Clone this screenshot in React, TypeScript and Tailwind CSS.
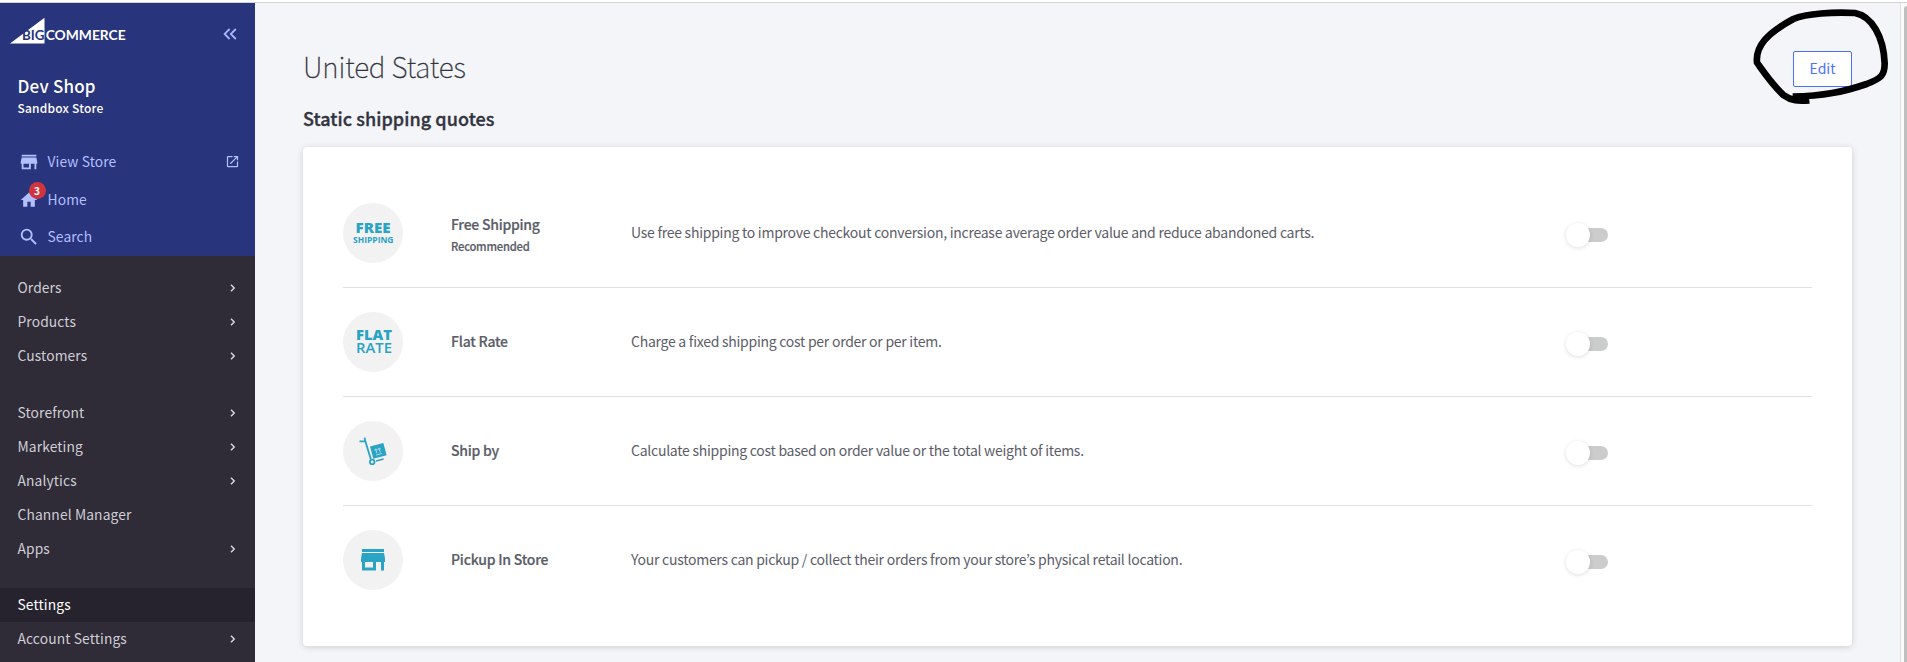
import React from "react";
import { MdStore, MdHome, MdSearch, MdOpenInNew } from "react-icons/md";

type NavItem = { label: string; arrow: boolean; active?: boolean };

const groups: { className: string; items: NavItem[] }[] = [
  {
    className: "mt-[15px]",
    items: [
      { label: "Orders", arrow: true },
      { label: "Products", arrow: true },
      { label: "Customers", arrow: true },
    ],
  },
  {
    className: "mt-[23px]",
    items: [
      { label: "Storefront", arrow: true },
      { label: "Marketing", arrow: true },
      { label: "Analytics", arrow: true },
      { label: "Channel Manager", arrow: false },
      { label: "Apps", arrow: true },
    ],
  },
  {
    className: "mt-[22px]",
    items: [
      { label: "Settings", arrow: false, active: true },
      { label: "Account Settings", arrow: true },
    ],
  },
];

function Logo() {
  return (
    <svg width="118" height="28" viewBox="0 0 118 28" className="block">
      <path d="M0 29.5 L34.5 3.8 V29.5 Z" fill="#fff" />
      <text x="12" y="26.2" textLength="22.5" lengthAdjust="spacingAndGlyphs" fontFamily="Lato" fontWeight="700" fontSize="13.2" fill="#28347c">BIG</text>
      <text x="35.7" y="26.2" textLength="80" lengthAdjust="spacingAndGlyphs" fontFamily="Lato" fontWeight="700" fontSize="13.2" fill="#fff">COMMERCE</text>
    </svg>
  );
}

function Chevron() {
  return (
    <svg width="6" height="8" viewBox="0 0 6 8" fill="none" stroke="#d8d6de" strokeWidth="1.5">
      <path d="M1 0.8 L4.2 4 L1 7.2" />
    </svg>
  );
}

function Sidebar() {
  return (
    <aside className="flex w-[255px] shrink-0 flex-col bg-[#2f2b37]">
      <div className="h-[253px] shrink-0 bg-[#28347c]">
        <div className="flex h-[42px] items-start justify-between pt-[11px] pr-[18px] pl-[10px]">
          <div className="h-[31px] [&>svg]:overflow-visible">
            <Logo />
          </div>
          <svg width="14" height="12" viewBox="0 0 14 12" fill="none" stroke="#a9b6fb" strokeWidth="1.8" className="mt-[14px]">
            <path d="M6.6 1 L1.6 6 L6.6 11 M12.8 1 L7.8 6 L12.8 11" />
          </svg>
        </div>
        <div className="mt-[28px] pl-[17.5px] text-white">
          <div className="h-[25px] text-[17px] leading-[25px] font-medium tracking-[0.2px]">Dev Shop</div>
          <div className="h-[20px] text-[12px] leading-[20px] font-medium tracking-[0.2px]">Sandbox Store</div>
        </div>
        <div className="mt-[25px] text-[13.8px] tracking-[0.12px] text-[#b3bfff]">
          <div className="flex h-[37.5px] items-center pr-[15px] pl-[18px]">
            <MdStore size={22} />
            <span className="ml-[7.5px] grow">View Store</span>
            <MdOpenInNew size={15} />
          </div>
          <div className="flex h-[37.5px] items-center pl-[19px]">
            <div className="relative mt-[2px]">
              <MdHome size={20} />
              <span className="absolute -top-[8.5px] left-[9.5px] flex h-[17px] w-[17px] items-center justify-center rounded-full bg-[#d1343f] text-[10px] font-bold tracking-normal text-white">3</span>
            </div>
            <span className="ml-[8.5px]">Home</span>
          </div>
          <div className="flex h-[37.5px] items-center pl-[18px]">
            <MdSearch size={22} />
            <span className="ml-[7.5px]">Search</span>
          </div>
        </div>
      </div>
      <nav className="flex flex-col text-[13.8px] tracking-[0.12px] text-[#d0ced6]">
        {groups.map((g, i) => (
          <div key={i} className={g.className}>
            {g.items.map((it) => (
              <div
                key={it.label}
                className={
                  it.active
                    ? "flex h-[34px] items-center bg-[#26232e] pl-[17.5px] text-white"
                    : "flex h-[34px] items-center justify-between pr-[19px] pl-[17.5px]"
                }
              >
                <span className="mb-[2px]">{it.label}</span>
                {it.arrow && <Chevron />}
              </div>
            ))}
          </div>
        ))}
      </nav>
    </aside>
  );
}

function Trolley() {
  return (
    <svg width="28" height="28" viewBox="0 0 28 28" fill="none" stroke="#2aa3c4" className="block">
      <path d="M0.5 4.4 L6 4.4 M5.6 0.6 L6.4 4.6 L11.8 22" strokeWidth="1.8" />
      <circle cx="13.2" cy="25" r="2.3" strokeWidth="1.8" />
      <path d="M17 23.9 L24.6 21.9" strokeWidth="1.6" />
      <g transform="rotate(-15 18.8 13.8)">
        <rect x="12.4" y="7.6" width="13.8" height="12.8" fill="#2aa3c4" stroke="none" />
        <path d="M17.3 11.6 V16 M20.7 11.6 V16 M15.9 13 L17.3 11.4 L18.7 13 M19.3 13 L20.7 11.4 L22.1 13 M16 17.5 H22" stroke="#b5dfea" strokeWidth="0.8" />
      </g>
    </svg>
  );
}

const rows: { name: string; note?: string; text: string; icon: React.ReactNode }[] = [
  {
    name: "Free Shipping",
    note: "Recommended",
    text: "Use free shipping to improve checkout conversion, increase average order value and reduce abandoned carts.",
    icon: (
      <svg width="60" height="60" viewBox="0 0 60 60" fill="#2aa3c4" fontFamily="Open Sans">
        <text x="12.5" y="30" textLength="35" lengthAdjust="spacingAndGlyphs" fontSize="14.5" fontWeight="800">FREE</text>
        <text x="10" y="39.6" textLength="40.5" lengthAdjust="spacingAndGlyphs" fontSize="8.6" fontWeight="700">SHIPPING</text>
      </svg>
    ),
  },
  {
    name: "Flat Rate",
    text: "Charge a fixed shipping cost per order or per item.",
    icon: (
      <svg width="60" height="60" viewBox="0 0 60 60" fill="#2aa3c4" fontFamily="Open Sans" fontSize="14.2">
        <text x="13" y="28" textLength="36" lengthAdjust="spacingAndGlyphs" fontWeight="800">FLAT</text>
        <text x="13" y="40.8" textLength="36" lengthAdjust="spacingAndGlyphs" fontWeight="600">RATE</text>
      </svg>
    ),
  },
  {
    name: "Ship by",
    text: "Calculate shipping cost based on order value or the total weight of items.",
    icon: <Trolley />,
  },
  {
    name: "Pickup In Store",
    text: "Your customers can pickup / collect their orders from your store’s physical retail location.",
    icon: (
      <svg width="24" height="22" viewBox="0 0 24 22" fill="#2aa3c4">
        <path d="M1 0 H23 V3 H1 Z M1 4 H23 L24 9.6 V13 H23 V21.5 H20 V13 H15 V21.5 H1 V13 H0 V9.6 Z M4 13 V18.6 H12 V13 Z" fillRule="evenodd" />
      </svg>
    ),
  },
];

function Toggle() {
  return (
    <div className="flex h-[24px] w-[42px] items-center">
      <div className="z-10 h-[24px] w-[24px] shrink-0 rounded-full bg-white shadow-[0_1px_4px_rgba(49,52,64,0.16)]" />
      <div className="-ml-[14px] h-[14px] w-[32px] rounded-full bg-[#cbcccc]" />
    </div>
  );
}

export default function App() {
  return (
    <div className="relative flex h-[662px] w-[1907px] flex-col overflow-hidden bg-[#f4f5f8] font-['Noto_Sans_CJK_JP',sans-serif]">
      <div className="h-[3px] shrink-0 border-b border-[#d3d4d7] bg-white" />
      <div className="flex min-h-0 grow">
        <Sidebar />
        <main className="flex grow flex-col pr-[48px] pl-[48px]">
          <div className="mt-[48px] flex h-[36px] items-start justify-between">
            <h1 className="mt-[-3px] text-[28px] leading-[36px] font-thin tracking-[-0.1px] text-[#313440] [-webkit-text-stroke:0.35px_#313440]">United States</h1>
            <button className="h-[36px] w-[59px] rounded-[2px] border border-[#4b71fc] bg-white pb-[2px] text-[14px] text-[#4b71fc]">Edit</button>
          </div>
          <h2 className="mt-[16px] h-[31px] text-[18px] leading-[30px] font-medium tracking-[0.06px] text-[#313440] [-webkit-text-stroke:0.35px_#313440]">Static shipping quotes</h2>
          <section className="mt-[13px] h-[499px] shrink-0 rounded-[4px] bg-white px-[40px] py-[32px] shadow-[0_1px_6px_rgba(49,52,64,0.2)]">
            {rows.map((r, i) => (
              <div
                key={r.name}
                className={
                  i < 3
                    ? "flex h-[109px] items-center border-b border-[#dfe0e4]"
                    : "flex h-[108px] items-center"
                }
              >
                <div className="flex h-[60px] w-[60px] shrink-0 items-center justify-center rounded-full bg-[#f2f2f2]">{r.icon}</div>
                <div
                  className={
                    r.note
                      ? "mt-[1px] ml-[48px] w-[180px] shrink-0 font-medium tracking-[-0.25px] text-[#5b5d68] [-webkit-text-stroke:0.2px_#5b5d68]"
                      : "mb-[2px] ml-[48px] w-[180px] shrink-0 font-medium tracking-[-0.22px] text-[#5b5d68] [-webkit-text-stroke:0.2px_#5b5d68]"
                  }
                >
                  <div className="text-[14px] leading-[24px]">{r.name}</div>
                  {r.note && <div className="text-[11.2px] leading-[20px] tracking-[-0.2px]">{r.note}</div>}
                </div>
                <div className="mb-[2px] w-[935px] shrink-0 text-[14px] leading-[24px] tracking-[-0.26px] text-[#5b5d68]">{r.text}</div>
                <div className="mt-[4px]">
                  <Toggle />
                </div>
              </div>
            ))}
          </section>
        </main>
        <div className="flex w-[7px] shrink-0 justify-end border-l border-[#dedede] bg-[#fafafa] pt-[3px]">
          <div className="w-[3px] rounded-tl-[3px] bg-[#bfbfbf]" />
        </div>
      </div>
      <svg className="pointer-events-none absolute top-0 left-[1700px]" width="207" height="170" viewBox="0 0 621 510" fill="none" stroke="#000" strokeWidth="20" strokeLinejoin="round">
        <path d="M328 301 C295 304 275 303 250 285 C215 252 192 217 171 188 C166 140 200 100 280 57 C320 40 400 36 465 39 C515 48 551 110 554 190 C554 225 545 235 500 252 C430 276 370 288 278 290" />
      </svg>
    </div>
  );
}
